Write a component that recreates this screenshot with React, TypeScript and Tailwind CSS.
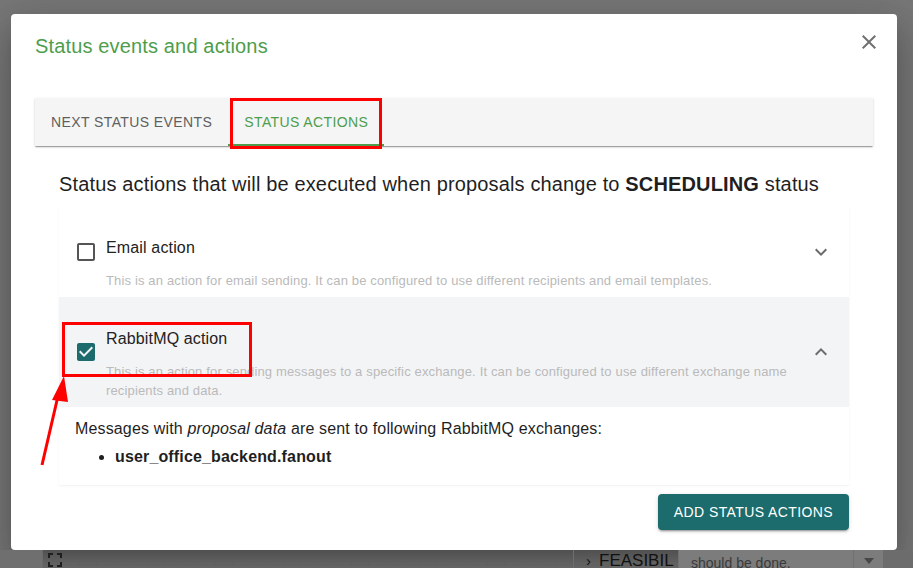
import React from 'react';

const actions = [
  {
    name: 'Email action',
    description:
      'This is an action for email sending. It can be configured to use different recipients and email templates.',
    checked: false,
  },
  {
    name: 'RabbitMQ action',
    description:
      'This is an action for sending messages to a specific exchange. It can be configured to use different exchange name recipients and data.',
    checked: true,
  },
];

const ExpandIcon = ({ up = false }: { up?: boolean }) => (
  <svg viewBox="0 0 24 24" className={`w-6 h-6 fill-[#6b6b6b] ${up ? 'rotate-180' : ''}`}>
    <path d="M16.59 8.59 12 13.17 7.41 8.59 6 10l6 6 6-6z" />
  </svg>
);

const CheckIcon = ({ checked }: { checked: boolean }) =>
  checked ? (
    <svg viewBox="0 0 24 24" className="w-6 h-6 fill-[#1c6b6d]">
      <path d="M19 3H5c-1.11 0-2 .9-2 2v14c0 1.1.89 2 2 2h14c1.11 0 2-.9 2-2V5c0-1.1-.89-2-2-2zm-9 14l-5-5 1.41-1.41L10 14.17l7.59-7.59L19 8l-9 9z" />
    </svg>
  ) : (
    <svg viewBox="0 0 24 24" className="w-6 h-6 fill-[#555]">
      <path d="M19 5v14H5V5h14m0-2H5c-1.1 0-2 .9-2 2v14c0 1.1.9 2 2 2h14c1.1 0 2-.9 2-2V5c0-1.1-.9-2-2-2z" />
    </svg>
  );

const ActionItem = ({ name, description, checked }: (typeof actions)[number]) => (
  <div className={`flex items-center pl-[15px] pr-4 pt-[30px] pb-[7px] ${checked ? 'bg-[#f3f4f6]' : ''}`}>
    <div className="mr-2 -mt-[23px]">
      <CheckIcon checked={checked} />
    </div>
    <div className="flex-1 mr-4">
      <div className="text-base leading-6 text-[#222]">{name}</div>
      <div className="mt-[11px] text-[13px] leading-[19px] text-[#bababa]">{description}</div>
    </div>
    <div className="-mt-[23px]">
      <ExpandIcon up={checked} />
    </div>
  </div>
);

const BackgroundRow = () => (
  <div className="flex h-[30px] text-[#111] tracking-normal">
    <div className="w-[43px] bg-[#6f6f6f] border-r border-[#6a6a6a]" />
    <div className="w-[32px] -mt-[2px]">
      <svg viewBox="0 0 24 24" className="w-6 h-6 fill-[#1e1e1e]">
        <path d="M7 14H5v5h5v-2H7v-3zm-2-4h2V7h3V5H5v5zm12 7h-3v2h5v-5h-2v3zM14 5v2h3v3h2V5h-5z" />
      </svg>
    </div>
    <div className="w-[498px] flex gap-[16px] pt-[12px] pl-[4px]">
      {Array.from({ length: 30 }).map((_, i) => (
        <span key={i} className="w-px h-[2px] bg-[#5c5c5c]" />
      ))}
    </div>
    <div className="w-[105px] border-l border-[#6e6e6e] flex items-start pl-[12px] pt-[2px] gap-[8px]">
      <span className="text-[15px] leading-[18px]">›</span>
      <span className="text-[17px] leading-[18px]">FEASIBIL</span>
    </div>
    <div className="w-[175px] bg-[#7c7c7c] border-l border-[#707070] pl-[12px] pt-[4px] text-[14px] leading-[18px] text-[#3a3a3a]">
      should be done.
    </div>
    <div className="w-[30px] bg-[#7c7c7c] border-l border-[#707070] flex justify-center pt-[8px]">
      <span className="w-0 h-0 border-x-[5px] border-x-transparent border-t-[6px] border-t-[#474747]" />
    </div>
    <div className="flex-1 bg-[#6c6c6c]" />
  </div>
);

export default function App() {
  return (
    <div className="relative w-[913px] h-[568px] overflow-hidden bg-[#777] tracking-[0.15px] font-['Liberation_Sans',Arial,sans-serif]">
      <div className="flex flex-col">
        <div className="ml-[11px] mt-[14px] w-[886px] h-[536px] bg-white rounded flex flex-col shadow-[0_11px_15px_-7px_rgba(0,0,0,0.2),0_24px_38px_3px_rgba(0,0,0,0.14),0_9px_46px_8px_rgba(0,0,0,0.12)]">
          <div className="flex items-start justify-between pl-6 pr-4 pt-4">
            <h2 className="text-xl leading-8 text-[#4e9d4c]">Status events and actions</h2>
            <button>
              <svg viewBox="0 0 24 24" className="w-6 h-6 fill-[#707070]">
                <path d="M19 6.41 17.59 5 12 10.59 6.41 5 5 6.41 10.59 12 5 17.59 6.41 19 12 13.41 17.59 19 19 17.59 13.41 12z" />
              </svg>
            </button>
          </div>

          <div className="px-6 pt-9">
            <div className="h-12 flex bg-[#f5f5f5] shadow-[0_2px_1px_-1px_rgba(0,0,0,0.2),0_1px_1px_0_rgba(0,0,0,0.14),0_1px_3px_0_rgba(0,0,0,0.12)]">
              <div className="px-4 flex items-center text-sm tracking-[0.4px] text-[#5f5f5f]">
                NEXT STATUS EVENTS
              </div>
              <div className="relative px-4 flex items-center text-sm tracking-[0.4px] text-[#4e9d4c]">
                STATUS ACTIONS
                <span className="absolute left-0 right-0 bottom-0 h-[2px] bg-[#4e9d4c]" />
              </div>
            </div>

            <div className="px-6 pt-6">
              <h3 className="text-xl leading-7 text-[#1f1f1f]">
                Status actions that will be executed when proposals change to <b>SCHEDULING</b> status
              </h3>

              <div className="mt-2 shadow-[0_1px_2px_rgba(0,0,0,0.06)]">
                {actions.map((a) => (
                  <ActionItem key={a.name} {...a} />
                ))}
                <div className="px-4 pt-[10px] pb-4 text-base leading-6 text-[#1f1f1f]">
                  <p>
                    Messages with <i>proposal data</i> are sent to following RabbitMQ exchanges:
                  </p>
                  <ul className="mt-[4px] pl-10 list-disc">
                    <li className="font-bold">user_office_backend.fanout</li>
                  </ul>
                </div>
              </div>

              <div className="mt-[9px] flex justify-end">
                <button className="h-9 px-4 rounded bg-[#1c6b6d] text-white text-sm tracking-[0.4px] shadow-[0_3px_1px_-2px_rgba(0,0,0,0.2),0_2px_2px_0_rgba(0,0,0,0.14),0_1px_5px_0_rgba(0,0,0,0.12)]">
                  ADD STATUS ACTIONS
                </button>
              </div>
            </div>
          </div>
        </div>
        <BackgroundRow />
      </div>

      {/* red annotations */}
      <div className="absolute left-[230px] top-[98px] w-[152px] h-[51px] border-[3px] border-[#ff0000]" />
      <div className="absolute left-[62px] top-[322px] w-[190px] h-[55px] border-[3px] border-[#ff0000]" />
      <svg className="absolute left-0 top-0" width="913" height="568">
        <line x1="42" y1="465" x2="58" y2="396" stroke="#ff0000" strokeWidth="3" />
        <polygon points="64,376 52,400 68,402" fill="#ff0000" />
      </svg>
    </div>
  );
}
